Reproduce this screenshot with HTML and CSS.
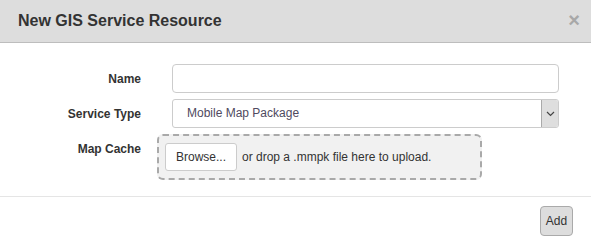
FILE: index.html
```html
<!DOCTYPE html>
<html lang="en">
<head>
    <meta charset="UTF-8">
    <title>New GIS Service Resource</title>
    <link rel="stylesheet" href="styles.css">
</head>
<body>
    <div class="modal">
        <div class="modal-header">
            <h3>New GIS Service Resource</h3>
            <span class="close">&times;</span>
        </div>
        <div class="modal-body">
            <div class="form-row">
                <label for="name">Name</label>
                <input type="text" id="name" class="field">
            </div>
            <div class="form-row">
                <label>Service Type</label>
                <div class="field select">
                    <span class="select-text">Mobile Map Package</span>
                    <span class="select-arrow">
                        <svg width="9" height="6" viewBox="0 0 9 6"><path d="M1 1 L4.5 4.5 L8 1" fill="none" stroke="#444" stroke-width="1.2"/></svg>
                    </span>
                </div>
            </div>
            <div class="form-row">
                <label>Map Cache</label>
                <div class="dropzone">
                    <button class="browse">Browse...</button>
                    <span>or drop a .mmpk file here to upload.</span>
                </div>
            </div>
        </div>
        <div class="modal-footer">
            <button class="add">Add</button>
        </div>
    </div>
</body>
</html>
```

FILE: styles.css
```css
body {
    margin: 0;
    font-family: "Liberation Sans", Arial, sans-serif;
    font-size: 12px;
    color: #333;
    background: #fff;
}
.modal-header {
    display: flex;
    justify-content: space-between;
    align-items: center;
    height: 42px;
    padding: 0 11px 0 18px;
    background-color: #dddddd;
    border-bottom: 1px solid #bdbdbd;
}
.modal-header h3 {
    margin: 0;
    font-size: 16px;
    color: #333;
}
.close {
    font-size: 20px;
    font-weight: bold;
    color: #a8a8a8;
    line-height: 1;
    margin-top: -2px;
}
.modal-body {
    padding: 21px 32px 16px 0;
}
.form-row {
    display: flex;
    align-items: flex-start;
    margin-bottom: 6px;
}
.form-row:last-child {
    margin-bottom: 0;
}
.form-row label {
    width: 141px;
    padding-top: 8px;
    line-height: 14px;
    text-align: right;
    font-weight: bold;
    color: #333;
    flex-shrink: 0;
}
.field {
    box-sizing: border-box;
    margin-left: 31px;
    width: 387px;
    height: 29px;
    border: 1px solid #ccc;
    border-radius: 4px;
    background: #fff;
}
.select {
    display: flex;
    align-items: stretch;
    border-radius: 3px;
    overflow: hidden;
}
.select-text {
    flex: 1;
    padding-left: 14px;
    line-height: 27px;
    color: #4f4a60;
}
.select-arrow {
    width: 16px;
    display: flex;
    align-items: center;
    justify-content: center;
    background: #dedede;
    border-left: 1px solid #aaa;
}
.dropzone {
    box-sizing: border-box;
    margin-left: 16px;
    width: 325px;
    height: 46px;
    padding: 6px;
    display: flex;
    align-items: center;
    gap: 5px;
    background: #f1f1f1;
    border: 2px dashed #a9a9a9;
    border-radius: 6px;
    color: #333;
}
.browse {
    width: 72px;
    height: 28px;
    background: #fff;
    border: 1px solid #ccc;
    border-radius: 3px;
    font-family: inherit;
    font-size: 12px;
    color: #333;
    padding: 0;
}
.modal-footer {
    display: flex;
    justify-content: flex-end;
    padding: 9px 18px 6px 0;
    border-top: 1px solid #e5e5e5;
}
.add {
    width: 33px;
    height: 30px;
    padding: 0;
    background-color: #dddddd;
    border: 1px solid #aaa;
    border-radius: 4px;
    font-family: inherit;
    font-size: 12px;
    color: #333;
}
```
